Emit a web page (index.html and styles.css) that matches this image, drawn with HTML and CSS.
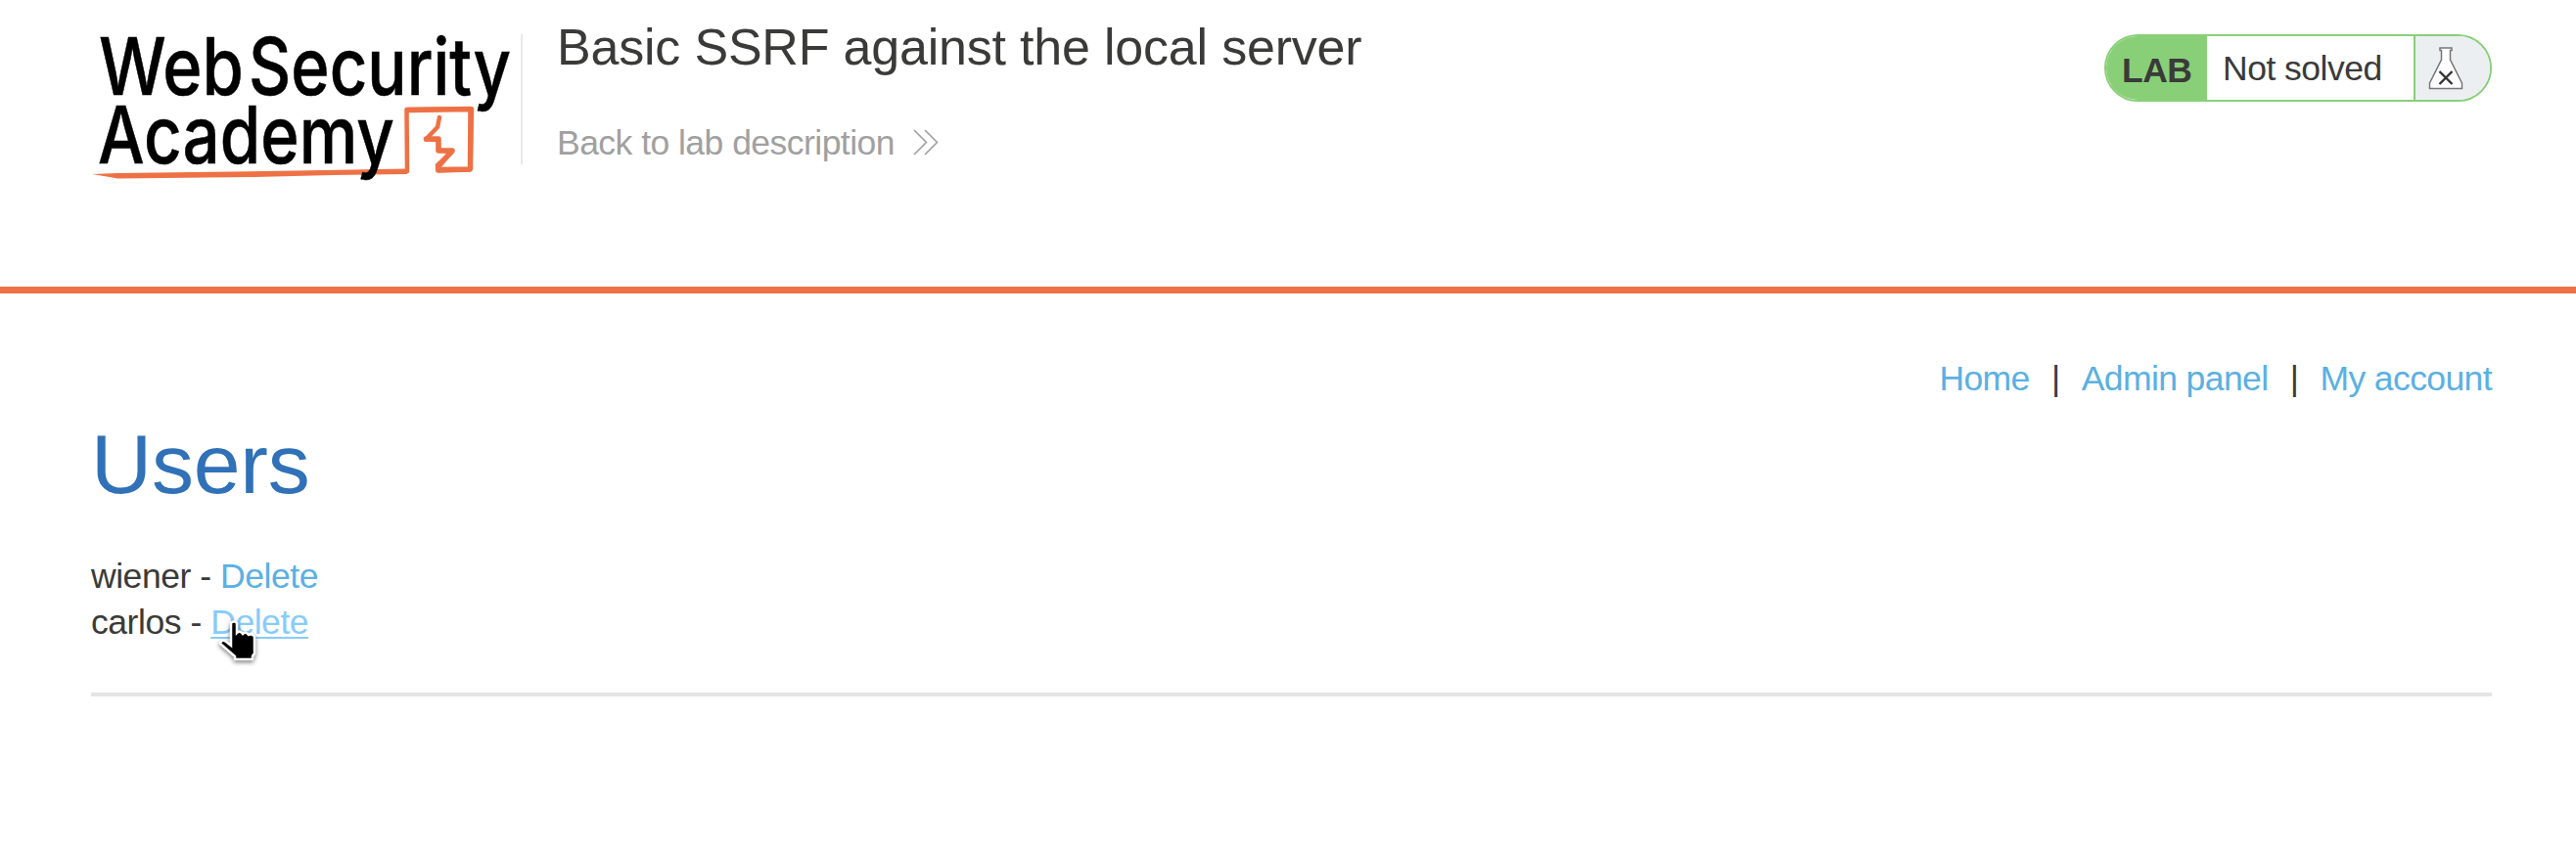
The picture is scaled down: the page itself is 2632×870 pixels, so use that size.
FILE: index.html
```html
<!DOCTYPE html>
<html lang="en">
<head>
<meta charset="utf-8">
<title>Basic SSRF against the local server</title>
<link rel="stylesheet" href="styles.css">
</head>
<body>
<header class="lab-header">
  <svg class="logo" viewBox="93 20 435 170" role="img" aria-label="Web Security Academy">
    <g fill="none" stroke="#ee7145" stroke-linejoin="round" stroke-linecap="round">
      <path fill="#ee7145" stroke="none" d="M94 178 L120 177 L270 175 L360 173.500 L416 172.500 V178 L340 179 L260 181 L120 182.500 L112 181 Z"/>
      <path stroke-width="4.500" d="M416 175 L415.500 112 L482 111.500 L480.500 173.500 L447.500 174.500 L447 169 L462 155 L448 153.500 L448 143 L435 142.500 L447 130 L449 120"/>
      <path stroke-width="5.500" d="M417 112.500 L481 111.500 L480.500 172 M448 173.500 L479 173 M435.500 142 H448 V154 H462 L448 170"/>
    </g>
    <g class="logo-text">
      <text x="101" y="97.300" textLength="148" lengthAdjust="spacingAndGlyphs">Web</text>
      <text x="254" y="97.300" textLength="268" lengthAdjust="spacingAndGlyphs">Security</text>
      <text x="100" y="166.500" textLength="303" lengthAdjust="spacingAndGlyphs">Academy</text>
    </g>
  </svg>
  <div class="title">
    <h2>Basic SSRF against the local server</h2>
    <a class="back">Back to lab description
      <svg class="chevrons" viewBox="0 0 26 28"><path d="M1 1 L13.500 13.500 L1 26 M12 1 L24.500 13.500 L12 26"/></svg>
    </a>
  </div>
  <div class="status">
    <span class="lab">LAB</span>
    <p>Not solved</p>
    <span class="flask">
      <svg viewBox="0 0 36 44"><path class="glass" d="M12 1 H24 V3.500 H22.500 V13 L34.500 37 V42.500 H1.500 V37 L13.500 13 V3.500 H12 Z"/><path class="cross" d="M11.500 25 L24.500 38 M24.500 25 L11.500 38"/></svg>
    </span>
  </div>
</header>
<main class="page">
  <nav class="links"><a>Home</a><span>|</span><a>Admin panel</a><span>|</span><a>My account</a></nav>
  <h1>Users</h1>
  <div class="user">wiener - <a>Delete</a></div>
  <div class="user">carlos - <a class="hover">Delete</a></div>
  <hr>
</main>
<svg class="cursor" viewBox="0 0 44 48"><path d="M13 4 Q16 1 19 4 V14 Q22 11 25 15 Q28 12 31 16 Q35 14 37 18 V35 L35 38 V41 H17 V38 L2 25 Q3 20 8 23 L13 27 Z"/></svg>
</body>
</html>
```
FILE: styles.css
```css
* { box-sizing: border-box; }
body {
  margin: 0;
  height: 870px;
  overflow: hidden;
  background: #fff;
  color: #3a3a39;
  font: 35.5px/47.5px "Liberation Sans", Arial, sans-serif;
  letter-spacing: -0.6px;
}
h1, h2, p { margin: 0; font-weight: 400; }
.lab-header {
  display: flex;
  align-items: flex-start;
  height: 300px;
  padding: 20px 86px 0 93px;
  border-bottom: 7px solid #ee7145;
}
.logo { width: 435px; height: 170px; flex: none; overflow: visible; }
.logo-text { font: 500 81px Inter, sans-serif; letter-spacing: 0; fill: #000; stroke: #000; stroke-width: 0.5; }
.title {
  height: 133px;
  margin: 15px 0 0 4px;
  padding-left: 35px;
  border-left: 2px solid #e8e8e8;
}
.title h2 {
  margin-top: -17px;
  font-size: 52px;
  line-height: 60px;
  letter-spacing: -0.2px;
  white-space: nowrap;
}
.back {
  display: flex;
  align-items: center;
  gap: 19px;
  margin-top: 45px;
  color: #a0a0a0;
  font-size: 35.5px;
  letter-spacing: -0.53px;
  white-space: nowrap;
}
.chevrons { width: 26px; height: 28px; margin-top: -2px; fill: none; stroke: #a0a0a0; stroke-width: 1.6; }
.status {
  display: flex;
  width: 396px;
  height: 69px;
  margin: 15px 0 0 auto;
  border: 2px solid #89cf78;
  border-radius: 35px;
  overflow: hidden;
}
.lab {
  width: 103px;
  padding: 12px 0 0 16px;
  background: #89cf78;
  font-weight: 700;
  letter-spacing: -0.5px;
}
.status p { flex: 1; padding: 10px 0 0 16px; letter-spacing: -0.5px; white-space: nowrap; }
.flask {
  width: 78px;
  padding: 11px 0 0 13px;
  border-left: 2px solid #89cf78;
  background: #ebeff2;
}
.flask svg { display: block; width: 36px; height: 44px; }
.glass { fill: #fff; stroke: #777; stroke-width: 1.5; }
.cross { stroke: #333332; stroke-width: 2.4; }
.page { padding: 64px 86px 0 93px; }
.links { display: flex; justify-content: flex-end; }
.links span { width: 53px; text-align: center; }
a { color: #5bb0e2; }
h1 {
  margin: 8px 0 38px;
  color: #3071b7;
  font-size: 86px;
  line-height: 108px;
  letter-spacing: -0.2px;
}
.user { letter-spacing: -0.45px; }
.hover { color: #87cbfa; text-decoration: underline; text-decoration-thickness: 2px; text-underline-offset: 3px; }
hr { margin: 47px 0 0; border: 0; height: 4px; background: #e5e5e5; }
.cursor {
  position: absolute;
  left: 223px;
  top: 633px;
  width: 44px;
  height: 48px;
  overflow: visible;
  fill: #000;
  stroke: #fff;
  stroke-width: 2.5;
  filter: drop-shadow(0 2px 2px rgba(0, 0, 0, .5));
}
```
